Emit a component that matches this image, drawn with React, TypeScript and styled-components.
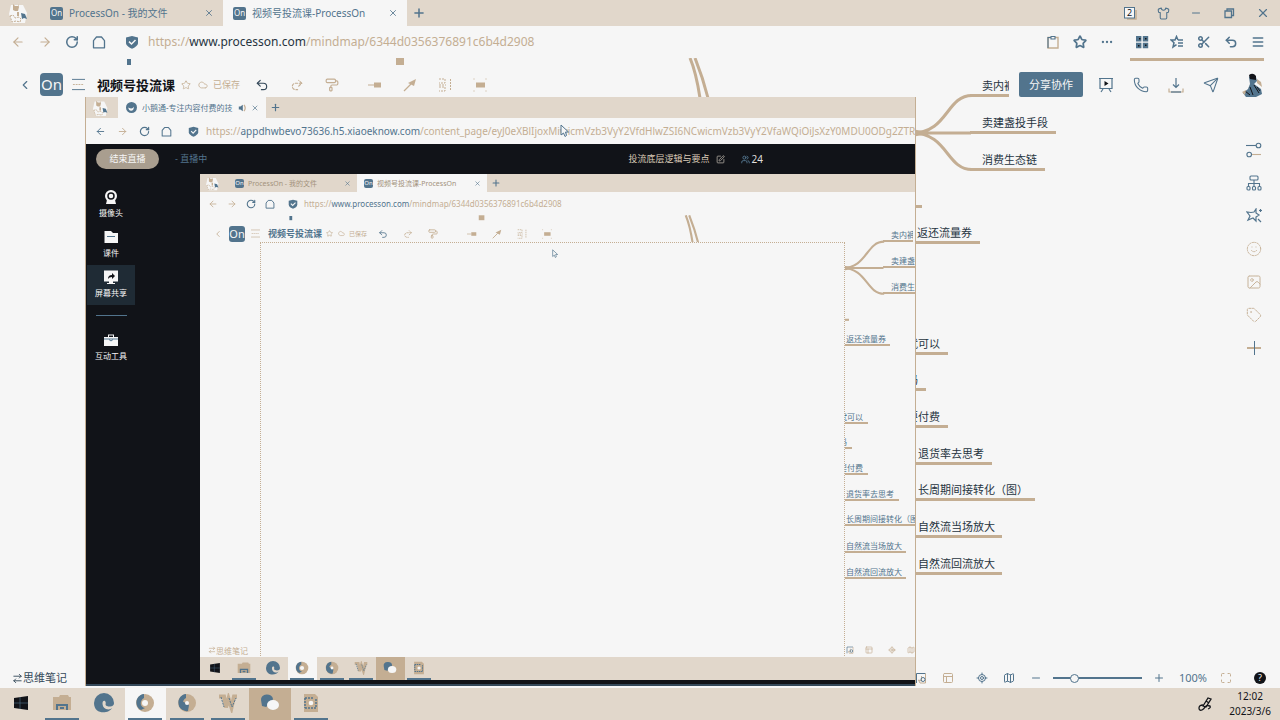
import React from "react";
import styled, { createGlobalStyle, css, ThemeProvider } from "styled-components";
import {
  ArrowLeft, ArrowRight, RotateCw, Star, Ellipsis, Scissors, Undo2, Redo2, Menu, Minus, Plus, X,
  Shirt, Phone, Send, Smile, Image as Picture, Tag, LocateFixed, Map as MapIcon, Maximize, PanelsTopLeft,
  PaintRoller, ChevronLeft, SquarePen, Users, Cloud, ArrowRightLeft,
} from "lucide-react";

const color = {
  paper: "#f6f6f6",
  strip: "#e1d7cb",
  tan: "#c4ae93",
  blue: "#52748d",
  ink: "#111318",
};

/* Lengths scale with the theme, so the shared screen can show the same desktop at a smaller size. */
const u = (n: number) => (p: any) => `${Math.round(n * p.theme.s)}px`;

const Global = createGlobalStyle`
  * { box-sizing: border-box; }
  body { margin: 0; background: ${color.paper}; font-family: "Noto Sans", "Noto Sans CJK SC", sans-serif; color: ${color.ink}; }
  button { border: 0; padding: 0; margin: 0; background: none; font: inherit; color: inherit; }
`;

const Screen = styled.div<{ $shared?: boolean }>`
  display: flex;
  flex-direction: column;
  background: ${color.paper};
  ${(p) => (p.$shared ? css`width: ${u(1280)}; height: 100%;` : css`min-height: 100vh;`)}
`;

const Spacer = styled.div`flex: 1;`;

const IconButton = styled.button<{ $size?: number; $tone?: string }>`
  display: block;
  flex: none;
  width: ${(p) => u(p.$size ?? 14)(p)};
  height: ${(p) => u(p.$size ?? 14)(p)};
  color: ${(p) => p.$tone ?? color.blue};
  svg { display: block; width: 100%; height: 100%; }
`;

/* ---------- browser chrome ---------- */

const TabStrip = styled.div`
  display: flex;
  align-items: center;
  flex: none;
  height: ${u(26)};
  padding-right: ${u(10)};
  background: ${color.strip};
`;
const Profile = styled.div`
  width: ${u(20)};
  margin-left: ${u(9)};
  margin-right: ${u(11)};
  flex: none;
  svg { display: block; width: 100%; height: ${u(22)}; }
`;
const Tab = styled.div<{ $active?: boolean; $width: number }>`
  display: flex;
  align-items: center;
  flex: none;
  gap: ${u(6)};
  width: ${(p) => u(p.$width)(p)};
  height: 100%;
  padding: 0 ${u(9)} 0 ${u(10)};
  background: ${(p) => (p.$active ? color.paper : "transparent")};
  color: ${color.blue};
`;
const TabTitle = styled.span<{ $faint?: boolean }>`
  flex: 1;
  min-width: 0;
  overflow: hidden;
  white-space: nowrap;
  font-size: ${u(10)};
  line-height: ${u(16)};
  color: ${(p) => (p.$faint ? "#a3927c" : color.blue)};
`;
const NewTab = styled.div`
  flex: 1;
  padding-left: ${u(5)};
`;
const Logo = styled.span<{ $size: number; $font: number }>`
  display: flex;
  align-items: center;
  justify-content: center;
  flex: none;
  width: ${(p) => u(p.$size)(p)};
  height: ${(p) => u(p.$size)(p)};
  border-radius: ${(p) => u(p.$size / 6)(p)};
  background: ${color.blue};
  color: ${color.paper};
  font-size: ${(p) => u(p.$font)(p)};
  line-height: 1;
`;
const WindowControls = styled.div`
  display: flex;
  align-items: center;
  gap: ${u(20)};
`;

const AddressBar = styled.div<{ $flush?: boolean }>`
  display: flex;
  align-items: center;
  flex: none;
  height: ${u(32)};
  padding: 0 ${(p) => (p.$flush ? "0px" : u(15)(p))} 0 ${u(11)};
`;
const NavGroup = styled.div`
  display: flex;
  align-items: center;
  gap: ${u(13)};
  margin-right: ${u(19)};
  flex: none;
`;
const ToolGroup = styled(NavGroup)<{ $end?: boolean }>`
  margin-right: ${(p) => (p.$end ? "0px" : u(21)(p))};
`;
const Url = styled.div<{ $font: number; $soft?: boolean }>`
  flex: 1;
  min-width: 0;
  overflow: hidden;
  white-space: nowrap;
  margin-left: ${u(9)};
  font-size: ${(p) => p.$font}px;
  line-height: ${u(20)};
  color: ${color.tan};
  b { font-weight: 400; color: ${(p) => (p.$soft ? color.blue : "#26343f")}; }
`;

const CatArt = () => (
  <svg viewBox="0 0 20 22" aria-hidden="true">
    <path d="M2 3h12l4 8-2 10H3L0 12z" fill={color.paper} />
    <path d="M4 2l2 2h3V2l1 3-1 4H6L4 8zM8 10h2v4H8z" fill={color.tan} />
    <path d="M12 11l4 1 2 5-3-1-2 1z" fill={color.blue} />
    <path d="M1 14l3-1 2 3 4-1 2 2-1 3-4-1-4 1z" fill="none" stroke={color.tan} strokeDasharray="2 1" />
  </svg>
);
const HomeIcon = () => (
  <svg viewBox="0 0 14 14" fill="none" stroke="currentColor" strokeWidth="1.3">
    <path d="M1.5 12.8V5.600L4.500 2h5l3 3.600V12.800z" strokeLinejoin="round" />
  </svg>
);
const ShieldIcon = () => (
  <svg viewBox="0 0 14 14">
    <path d="M1 2.500L7 1l6 1.500V8c0 2.500-3 4.500-6 5.700C4 12.500 1 10.500 1 8z" fill="currentColor" />
    <path d="M4 6.600l2.500 2.400 4-4" fill="none" stroke={color.paper} strokeWidth="1.500" />
  </svg>
);
const ClipboardIcon = () => (
  <svg viewBox="0 0 14 14" fill="none" stroke="currentColor">
    <path d="M9 2.500h3v10.500H2V2.500h3" stroke={color.tan} strokeWidth="1.400" />
    <path d="M2 13V2.500h3M5 4V1.500h4V4z" strokeWidth="1.100" />
  </svg>
);
const GridIcon = () => (
  <svg viewBox="0 0 14 14" fill="currentColor">
    <path d="M1 1h5.400v5.400H1zM7.800 1h5.400v5.400H7.800zM1 7.800h5.400v5.400H1zM7.800 7.800h5.400v5.400H7.800z" />
    <path d="M4 3h1.500v1.500H4zM10 3h1.500v1.500H10zM3 10h1.500v1.500H3zM10 9.500h1.500V11H10z" fill={color.ink} />
  </svg>
);
const StarListIcon = () => (
  <svg viewBox="0 0 14 14" fill="none" stroke="currentColor" strokeWidth="1.500">
    <path d="M8 5L6.500 1.500 5 5H1l3 2.700L3 12l3.500-2.300M8 5h5M8 8h5M8 11h5" />
  </svg>
);
const RestoreIcon = () => (
  <svg viewBox="0 0 14 14" fill="none" stroke="currentColor" strokeWidth="1.300">
    <path d="M3 5h6.500v6.500H3zM5 5V3h6.500v6.500H9.500" />
  </svg>
);
const CountIcon = () => (
  <svg viewBox="0 0 14 14" fill="none">
    <path d="M4 13h9V4" stroke={color.tan} strokeWidth="1.500" />
    <rect x="1.500" y="1.500" width="10" height="10.500" fill={color.paper} stroke={color.blue} />
    <text x="6.500" y="10" textAnchor="middle" fontSize="9" fill={color.ink}>2</text>
  </svg>
);

const NavButtons = ({ canGoBack }: { canGoBack?: boolean }) => (
  <NavGroup>
    <IconButton aria-label="后退" $tone={canGoBack ? color.blue : color.tan}><ArrowLeft /></IconButton>
    <IconButton aria-label="前进" $tone={color.tan}><ArrowRight /></IconButton>
    <IconButton aria-label="刷新"><RotateCw strokeWidth={2.6} /></IconButton>
    <IconButton aria-label="主页"><HomeIcon /></IconButton>
  </NavGroup>
);

const BrowserChrome = ({ shared }: { shared?: boolean }) => (
  <>
    <TabStrip>
      <Profile><CatArt /></Profile>
      <Tab $width={183}>
        <Logo $size={13} $font={8}>On</Logo>
        <TabTitle $faint={shared}>ProcessOn - 我的文件</TabTitle>
        <IconButton $size={10} aria-label="关闭标签页"><X /></IconButton>
      </Tab>
      <Tab $width={184} $active>
        <Logo $size={13} $font={8}>On</Logo>
        <TabTitle $faint={shared}>视频号投流课-ProcessOn</TabTitle>
        <IconButton $size={10} aria-label="关闭标签页"><X /></IconButton>
      </Tab>
      <NewTab>
        <IconButton aria-label="新标签页"><Plus strokeWidth={2.6} /></IconButton>
      </NewTab>
      <WindowControls>
        <IconButton aria-label="窗口数"><CountIcon /></IconButton>
        <IconButton $size={13} aria-label="皮肤"><Shirt /></IconButton>
        <IconButton $size={12} aria-label="最小化"><Minus /></IconButton>
        <IconButton aria-label="还原"><RestoreIcon /></IconButton>
        <IconButton aria-label="关闭"><X /></IconButton>
      </WindowControls>
    </TabStrip>
    <AddressBar>
      <NavButtons />
      <IconButton aria-label="安全"><ShieldIcon /></IconButton>
      <Url $font={shared ? 8 : 12} $soft={shared}>https://<b>www.processon.com</b>/mindmap/6344d0356376891c6b4d2908</Url>
      <ToolGroup>
        <IconButton aria-label="剪贴板"><ClipboardIcon /></IconButton>
        <IconButton aria-label="收藏"><Star strokeWidth={3} /></IconButton>
        <IconButton aria-label="更多"><Ellipsis /></IconButton>
      </ToolGroup>
      <ToolGroup>
        <IconButton aria-label="应用"><GridIcon /></IconButton>
      </ToolGroup>
      <ToolGroup $end>
        <IconButton aria-label="收藏夹"><StarListIcon /></IconButton>
        <IconButton aria-label="截图"><Scissors strokeWidth={2.6} /></IconButton>
        <IconButton aria-label="撤销"><Undo2 strokeWidth={2.6} /></IconButton>
        <IconButton aria-label="菜单"><Menu strokeWidth={2.6} /></IconButton>
      </ToolGroup>
    </AddressBar>
  </>
);

/* ---------- mind map editor ---------- */

const Editor = styled.main`
  position: relative;
  display: flex;
  flex-direction: column;
  flex: 1;
  min-height: 0;
  overflow: hidden;
`;
const MapLayer = styled.div`
  position: absolute;
  inset: 0;
`;
const MapLines = styled.svg`
  display: block;
  width: ${u(1280)};
  height: ${u(630)};
`;
const Node = styled.div<{ $x: number; $y: number; $w: number; $pad: number; $soft?: boolean }>`
  position: absolute;
  left: ${(p) => u(p.$x)(p)};
  top: ${(p) => u(p.$y - 8)(p)};
  width: ${(p) => u(p.$w)(p)};
  padding-left: ${(p) => u(p.$pad)(p)};
  border-bottom: ${u(3)} solid ${color.tan};
  white-space: nowrap;
  font-size: ${u(11)};
  line-height: ${u(16)};
  color: ${(p) => (p.$soft ? color.blue : "#26343f")};
`;

const nodes: { text: string; x: number; y: number; w: number; pad: number }[] = [
  { text: "卖内裤", x: 970, y: 28, w: 60, pad: 12 },
  { text: "卖建盏投手段", x: 970, y: 65, w: 86, pad: 12 },
  { text: "消费生态链", x: 970, y: 102, w: 75, pad: 12 },
  { text: "返还流量券", x: 906, y: 175, w: 74, pad: 11 },
  { text: "就可以", x: 906, y: 286, w: 42, pad: 1 },
  { text: "吗", x: 906, y: 322, w: 20, pad: 1 },
  { text: "要付费", x: 906, y: 359, w: 42, pad: 1 },
  { text: "退货率去思考", x: 906, y: 396, w: 86, pad: 12 },
  { text: "长周期间接转化（图）", x: 906, y: 432, w: 129, pad: 12 },
  { text: "自然流当场放大", x: 906, y: 469, w: 96, pad: 12 },
  { text: "自然流回流放大", x: 906, y: 506, w: 96, pad: 12 },
];

const DocBar = styled.header`
  position: relative;
  display: flex;
  align-items: center;
  flex: none;
  height: ${u(27)};
  margin-top: ${u(13)};
  padding: 0 ${u(15)} 0 ${u(18)};
`;
const BackLogo = styled.div`
  display: flex;
  align-items: center;
  gap: ${u(8)};
`;
const MenuButton = styled(IconButton)`
  margin: 0 ${u(12)} 0 ${u(9)};
`;
const DocTitle = styled.h1<{ $soft?: boolean }>`
  margin: 0 ${u(6)} 0 0;
  white-space: nowrap;
  font-size: ${u(13)};
  line-height: ${u(20)};
  font-weight: 700;
  color: ${(p) => (p.$soft ? color.blue : color.ink)};
`;
const SaveState = styled.div`
  display: flex;
  align-items: center;
  gap: ${u(5)};
  margin: 0 ${u(15)} 0 ${u(7)};
  white-space: nowrap;
  font-size: ${u(9)};
  color: ${color.tan};
`;
const EditTools = styled.div`
  display: flex;
  gap: ${u(21)};
  & + & { margin-left: ${u(41)}; }
`;
const ShareArea = styled.div`
  display: flex;
  align-items: center;
  gap: ${u(19)};
  margin-left: auto;
  padding-left: ${u(10)};
  height: 100%;
  background: ${color.paper};
`;
const ShareButton = styled.button`
  width: ${u(64)};
  height: ${u(25)};
  margin-right: -${u(4)};
  border-radius: 2px;
  background: ${color.blue};
  color: ${color.paper};
  font-size: ${u(11)};
  line-height: ${u(16)};
`;
const Avatar = styled(IconButton)`
  margin-left: ${u(3)};
`;
const Rail = styled.aside`
  position: relative;
  display: flex;
  flex-direction: column;
  align-self: flex-end;
  flex: 1;
  gap: ${u(17)};
  padding: ${u(44)} ${u(18)} 0;
`;

const StatusBar = styled.footer`
  position: relative;
  display: flex;
  align-items: center;
  flex: none;
  height: ${u(20)};
  padding: 0 ${u(14)} 0 ${u(12)};
`;
const Notes = styled.button<{ $soft?: boolean }>`
  display: flex;
  align-items: center;
  font-size: ${u(11)};
  line-height: ${u(16)};
  color: ${(p) => (p.$soft ? color.tan : "#35495a")};
  svg { width: ${u(11)}; height: ${u(11)}; }
`;
const StatusGroup = styled.div<{ $after: number }>`
  display: flex;
  gap: ${u(15)};
  margin-right: ${(p) => u(p.$after)(p)};
`;
const Zoom = styled.div`
  display: flex;
  align-items: center;
  gap: ${u(11)};
  margin-right: ${u(14)};
`;
const ZoomRange = styled.input`
  appearance: none;
  width: ${u(89)};
  height: ${u(10)};
  margin: 0;
  background: linear-gradient(${color.blue}, ${color.blue}) center / 100% 2px no-repeat;
  &::-webkit-slider-thumb {
    appearance: none;
    width: ${u(9)};
    height: ${u(9)};
    border: 1px solid ${color.blue};
    border-radius: 50%;
    background: ${color.paper};
  }
`;
const ZoomValue = styled.span`
  margin-right: ${u(13)};
  font-size: ${u(11)};
  line-height: ${u(16)};
  color: ${color.blue};
`;

const NodeToolIcon = () => (
  <svg viewBox="0 0 14 14"><path d="M6 4.500h7v5H6z" fill={color.tan} /><path d="M0 7h6" stroke={color.tan} /></svg>
);
const RelationIcon = () => (
  <svg viewBox="0 0 14 14"><path d="M1 13l7-7" stroke={color.tan} strokeWidth="1.300" /><path d="M13 1l-2 7-2-1-4-2z" fill={color.tan} /></svg>
);
const SummaryIcon = () => (
  <svg viewBox="0 0 14 14" fill="none" stroke={color.tan}><path d="M1 1h6v4H1M1 9h6v4H1M12.500 1v12M1 7h7" strokeDasharray="2 1" /></svg>
);
const OuterFrameIcon = () => (
  <svg viewBox="0 0 14 14"><path d="M3 4.500h9v5H3z" fill={color.tan} /><path d="M.500 1h1M12.500 1h1M.500 13h1M12.500 13h1" stroke={color.tan} /></svg>
);
const LinesIcon = () => (
  <svg viewBox="0 0 14 14" stroke="currentColor" fill="none"><path d="M0 1.500h14M0 12.500h14" /><path d="M1 7h12" stroke={color.tan} strokeDasharray="2 1" /></svg>
);
const PlayBoardIcon = () => (
  <svg viewBox="0 0 16 16" fill="none" stroke="currentColor" strokeWidth="1.200">
    <path d="M1 1.500h14M2 1.500v10h12v-10M5 12l-2 3M11 12l2 3" />
    <path d="M6.500 4v5l4-2.500z" fill={color.ink} stroke="none" />
  </svg>
);
const TrayIcon = () => (
  <svg viewBox="0 0 16 16" fill="none" stroke="currentColor" strokeWidth="1.200">
    <path d="M8 1v9M5 7.500l3 3 3-3" /><path d="M1 11.500V15h14v-3.500" stroke={color.tan} /><path d="M3 15h10" />
  </svg>
);
const StyleIcon = () => (
  <svg viewBox="0 0 16 16" fill="none" stroke="currentColor" strokeWidth="1.100">
    <path d="M0 3.500h10" /><circle cx="12.500" cy="3.500" r="2.300" /><circle cx="3.200" cy="12.500" r="2.300" /><path d="M6 12.500h9" stroke={color.tan} />
  </svg>
);
const StructureIcon = () => (
  <svg viewBox="0 0 16 16" fill="none" stroke="currentColor" strokeWidth="1.100">
    <rect x="4" y="1" width="8" height="4" rx="1" /><path d="M8 5v6M2.500 11V8.500h11V11" />
    <rect x="1" y="11.500" width="3" height="3.500" rx="1" /><rect x="6.500" y="11.500" width="3" height="3.500" rx="1" /><rect x="12" y="11.500" width="3" height="3.500" rx="1" />
  </svg>
);
const MagicIcon = () => (
  <svg viewBox="0 0 16 16" fill="none" stroke="currentColor" strokeWidth="1.200">
    <path d="M8 4l2 -3v4l3 2-3 2v4l-3-3-5 2 2-4-3-4 4 .500zM14.500 1v3M13 2.500h3M12 11l3 3" />
  </svg>
);
const AddIcon = () => (
  <svg viewBox="0 0 16 16" fill="none"><path d="M1 8h14" stroke={color.tan} strokeWidth="2" /><path d="M8.500 1v14" stroke="currentColor" /></svg>
);
const OutlinePageIcon = () => (
  <svg viewBox="0 0 12 12" fill="none" stroke={color.blue}>
    <path d="M1.500 11V1.500h9" /><path d="M10.500 1.500V11H5l-1.500-3 3 1V4" stroke={color.tan} /><circle cx="8" cy="7.500" r="2" />
  </svg>
);
const HelpIcon = () => (
  <svg viewBox="0 0 12 12"><circle cx="6" cy="6" r="6" fill={color.ink} /><text x="6" y="9.200" textAnchor="middle" fontSize="9" fill={color.paper}>?</text></svg>
);
const PersonArt = () => (
  <svg viewBox="0 0 24 24">
    <path d="M8 4q3-4 7 0l1 4-3 3 7 5 1 5-6 3H5l-3-4 5-4 2-5z" fill={color.blue} />
    <path d="M8 2q4-3 7 1v4l-6-1z" fill={color.ink} />
    <path d="M9 14l3 8M13 12l5 8M4 18l5 4M16 14l3 4" stroke={color.ink} />
    <path d="M16 6l4 3 1 5-5-4zM1 19l4-2-1 5z" fill={color.tan} />
  </svg>
);

const MindMap = ({ shared }: { shared?: boolean }) => (
  <MapLayer>
    <MapLines viewBox="0 0 1280 630" fill="none" stroke={color.tan} strokeWidth="3">
      <path d="M127 1h4v6h-4z" fill={color.blue} stroke="none" />
      <path d="M396 0h8v7h-8z" fill={color.tan} stroke="none" />
      <path d="M690 0Q696 14 700 40M695 0Q703 20 708 40" />
      <path d="M1130 1.500H1264" />
      <path d="M900 75H971M912 75C948 75 946 37.500 972 37.500M912 75C948 75 946 111.500 972 111.500" />
      <path d="M912 71L932 75 912 79z" fill={color.tan} stroke="none" />
      <path d="M906 148.500h16" />
    </MapLines>
    {nodes.map((n) => (
      <Node key={n.text} $x={n.x} $y={n.y} $w={n.w} $pad={n.pad} $soft={shared}>{n.text}</Node>
    ))}
  </MapLayer>
);

const EditorView = ({ shared, children }: { shared?: boolean; children?: React.ReactNode }) => {
  const tone = shared ? color.tan : color.blue;
  return (
    <Editor as={shared ? "div" : "main"}>
      <MindMap shared={shared} />
      <DocBar>
        <BackLogo>
          <IconButton aria-label="返回" $tone={tone}><ChevronLeft /></IconButton>
          <Logo $size={23} $font={15}>On</Logo>
        </BackLogo>
        <MenuButton $size={13} $tone={tone} aria-label="菜单"><LinesIcon /></MenuButton>
        <DocTitle $soft={shared}>视频号投流课</DocTitle>
        <IconButton $size={10} $tone={color.tan} aria-label="收藏"><Star strokeDasharray="3 2" /></IconButton>
        <SaveState>
          <IconButton as="span" $size={10} $tone={color.tan}><Cloud strokeDasharray="3 2" /></IconButton>
          已保存
        </SaveState>
        <EditTools>
          <IconButton aria-label="撤销" $tone={shared ? color.blue : "#35495a"}><Undo2 /></IconButton>
          <IconButton aria-label="重做" $tone={color.tan}><Redo2 strokeDasharray="4 3" /></IconButton>
          <IconButton aria-label="格式刷" $tone={color.tan}><PaintRoller /></IconButton>
        </EditTools>
        <EditTools>
          <IconButton aria-label="主题"><NodeToolIcon /></IconButton>
          <IconButton aria-label="关联线"><RelationIcon /></IconButton>
          <IconButton aria-label="概要"><SummaryIcon /></IconButton>
          <IconButton aria-label="外框"><OuterFrameIcon /></IconButton>
        </EditTools>
        <ShareArea>
          <ShareButton>分享协作</ShareButton>
          <IconButton $size={16} aria-label="演示"><PlayBoardIcon /></IconButton>
          <IconButton $size={16} aria-label="语音"><Phone strokeWidth={1.6} /></IconButton>
          <IconButton $size={16} aria-label="下载"><TrayIcon /></IconButton>
          <IconButton $size={16} aria-label="发送"><Send strokeWidth={1.6} /></IconButton>
          <Avatar $size={24} aria-label="账户"><PersonArt /></Avatar>
        </ShareArea>
      </DocBar>
      <Rail>
        <IconButton $size={16} aria-label="样式"><StyleIcon /></IconButton>
        <IconButton $size={16} aria-label="结构"><StructureIcon /></IconButton>
        <IconButton $size={16} aria-label="美化"><MagicIcon /></IconButton>
        <IconButton $size={16} $tone={color.tan} aria-label="表情"><Smile strokeWidth={1.4} strokeDasharray="2 2" /></IconButton>
        <IconButton $size={16} $tone={color.tan} aria-label="图片"><Picture strokeWidth={1.4} strokeDasharray="3 1" /></IconButton>
        <IconButton $size={16} $tone={color.tan} aria-label="标签"><Tag strokeWidth={1.4} strokeDasharray="3 2" /></IconButton>
        <IconButton $size={16} aria-label="添加"><AddIcon /></IconButton>
      </Rail>
      {children}
      <StatusBar>
        <Notes $soft={shared}><ArrowRightLeft />思维笔记</Notes>
        <Spacer />
        <StatusGroup $after={22}>
          <IconButton $size={12} aria-label="大纲"><OutlinePageIcon /></IconButton>
          <IconButton $size={12} $tone={color.tan} aria-label="布局"><PanelsTopLeft /></IconButton>
        </StatusGroup>
        <StatusGroup $after={11}>
          <IconButton $size={12} $tone={tone} aria-label="定位"><LocateFixed /></IconButton>
          <IconButton $size={12} $tone={tone} aria-label="导航"><MapIcon /></IconButton>
          <IconButton $size={12} aria-label="缩小"><Minus /></IconButton>
        </StatusGroup>
        <Zoom>
          <ZoomRange type="range" min={0} max={100} defaultValue={21} aria-label="缩放" />
          <IconButton $size={12} aria-label="放大"><Plus /></IconButton>
        </Zoom>
        <ZoomValue>100%</ZoomValue>
        <StatusGroup $after={22}>
          <IconButton $size={12} $tone={color.tan} aria-label="全屏"><Maximize /></IconButton>
        </StatusGroup>
        <IconButton $size={12} aria-label="帮助"><HelpIcon /></IconButton>
      </StatusBar>
    </Editor>
  );
};

/* ---------- taskbar ---------- */

const TaskbarRow = styled.div`
  display: flex;
  flex: none;
  height: ${u(32)};
  background: ${color.strip};
`;
const Apps = styled.div`
  display: grid;
  grid-template-columns: repeat(8, 1fr);
  width: ${u(332)};
`;
const TaskButton = styled.button<{ $fill?: string; $open?: boolean }>`
  display: flex;
  align-items: center;
  justify-content: center;
  border-bottom: 2px solid transparent;
  background-color: ${(p) => p.$fill ?? "transparent"};
  ${(p) => p.$open && css`
    background-image: linear-gradient(${color.blue}, ${color.blue});
    background-origin: border-box;
    background-position: center bottom;
    background-repeat: no-repeat;
    background-size: ${u(34)} 2px;
  `}
  svg { width: ${u(20)}; height: ${u(20)}; }
`;
const Tray = styled.div`
  display: flex;
  align-items: center;
  gap: ${u(17)};
  margin-left: auto;
  padding-right: ${u(9)};
`;
const Clock = styled.time`
  text-align: center;
  font-size: ${u(10)};
  line-height: ${u(15)};
`;

const WindowsArt = () => (
  <svg viewBox="0 0 20 20"><path d="M3 5l14-2v14L3 15z" fill={color.ink} /><path d="M9 4v12M3 10h14" stroke={color.blue} strokeWidth=".6" /></svg>
);
const FolderArt = () => (
  <svg viewBox="0 0 20 20"><path d="M1 4h6l1-2h8l1 2h2v13H1z" fill={color.tan} /><path d="M5 17v-5h10v5M8 15h4" fill="none" stroke={color.blue} strokeWidth="2" /></svg>
);
const EdgeArt = () => (
  <svg viewBox="0 0 20 20"><path d="M0 10a10 10 0 0 1 20 0c0 4-5 4-7 3-3-1 0-3-2-5-3-2-4 6 1 8 3 1 5 0 6-1-3 6-18 7-18-5z" fill={color.blue} /></svg>
);
const RingArt = ({ flip }: { flip?: boolean }) => (
  <svg viewBox="0 0 20 20">
    <circle cx="10" cy="10" r="9" fill={color.tan} />
    <path d="M9 1C0 2-1 14 6 17l4-2C5 14 4 8 9 5z" fill={color.blue} />
    {flip && <path d="M2 13q4 6 9 5l1-6-7-4z" fill={color.blue} />}
    <circle cx="10" cy="10" r={flip ? 2 : 3} fill={color.paper} />
  </svg>
);
const WriterArt = () => (
  <svg viewBox="0 0 20 20" fill="none">
    <path d="M1 3.500h5l2 11 2.500-9 3 9L16 3.500h3" stroke={color.tan} strokeWidth="4" /><path d="M3 4l3 10M11 5l3 9 4-9" stroke={color.blue} strokeDasharray="2 1" />
  </svg>
);
const ChatArt = () => (
  <svg viewBox="0 0 20 20"><path d="M1 7a6 5 0 0 1 12-1l-2 4-5 4-4-1z" fill={color.blue} /><ellipse cx="13" cy="12" rx="6" ry="5" fill={color.paper} /></svg>
);
const FileArt = () => (
  <svg viewBox="0 0 20 20"><path d="M3 1h11l3 3v15H3z" fill={color.tan} /><path d="M4 5h8M4 15h11M4 5v10M15 6v9" stroke={color.blue} strokeWidth="1.500" strokeDasharray="2 1" /><circle cx="10" cy="10" r="2.300" fill={color.paper} /></svg>
);

const Taskbar = () => (
  <TaskbarRow>
    <Apps>
      <TaskButton aria-label="开始"><WindowsArt /></TaskButton>
      <TaskButton aria-label="文件" $open><FolderArt /></TaskButton>
      <TaskButton aria-label="Edge"><EdgeArt /></TaskButton>
      <TaskButton aria-label="浏览器" $fill={color.paper} $open><RingArt /></TaskButton>
      <TaskButton aria-label="浏览器" $open><RingArt flip /></TaskButton>
      <TaskButton aria-label="WPS" $open><WriterArt /></TaskButton>
      <TaskButton aria-label="微信" $fill={color.tan}><ChatArt /></TaskButton>
      <TaskButton aria-label="文档" $open><FileArt /></TaskButton>
    </Apps>
    <Tray>
      <IconButton aria-label="手写笔">
        <svg viewBox="0 0 14 14" fill="none" stroke={color.ink} strokeWidth="1.300">
          <path d="M5 9l5-8 3 1-5 8zM8 4l3 2" /><path d="M5 8Q1 8 1 11t3 2q2-1 3-3t5-1q1 2-2 3" />
        </svg>
      </IconButton>
      <Clock>12:02<br />2023/3/6</Clock>
    </Tray>
  </TaskbarRow>
);

/* ---------- live streaming window ---------- */

const FloatingWindow = styled.section<{ $ghost?: boolean }>`
  position: absolute;
  left: ${u(85)};
  top: ${u(39)};
  bottom: ${u(2)};
  width: ${u(831)};
  display: flex;
  flex-direction: column;
  overflow: hidden;
  background: ${color.paper};
  border: 1px solid ${color.tan};
  border-width: ${(p) => (p.$ghost ? "1px 1px 0" : "0 1px")};
  border-style: ${(p) => (p.$ghost ? "dotted" : "solid")};
`;
const LiveHeader = styled.header`
  display: flex;
  align-items: center;
  flex: none;
  height: 30px;
  padding: 0 152px 0 10px;
  background: ${color.ink};
  font-size: 9px;
  line-height: 16px;
  color: ${color.blue};
`;
const EndButton = styled.button`
  width: 63px;
  height: 20px;
  margin-right: 16px;
  border-radius: 10px;
  background: #a99e8f;
  color: ${color.paper};
`;
const LiveTitle = styled.div`
  display: flex;
  align-items: center;
  gap: 6px;
  margin: 0 16px 0 auto;
  color: #dccdb9;
`;
const Viewers = styled.div`
  display: flex;
  align-items: center;
  gap: 2px;
  font-size: 10px;
  color: #dfdedc;
`;
const LiveBody = styled.div`
  display: flex;
  flex: 1;
  min-height: 0;
  padding-bottom: 4px;
  background: ${color.ink};
  border-bottom: 2px solid #35495a;
`;
const LiveNav = styled.nav`
  display: flex;
  flex-direction: column;
  flex: none;
  width: 114px;
  padding: 11px 0 0 1px;
`;
const LiveItem = styled.button<{ $on?: boolean }>`
  display: flex;
  flex-direction: column;
  align-items: center;
  width: 48px;
  height: 40px;
  padding-top: 4px;
  gap: 1px;
  background: ${(p) => (p.$on ? "#1f2b35" : "transparent")};
  color: ${color.paper};
  font-size: 8px;
  line-height: 14px;
  svg { width: 16px; height: 16px; display: block; }
`;
const Divider = styled.hr`
  width: 31px;
  height: 1px;
  margin: 10px 0 12px 9px;
  border: 0;
  background: ${color.blue};
`;
const SharedScreen = styled.div`
  flex: 1;
  min-width: 0;
  overflow: hidden;
`;
const Pointer = styled.svg<{ $x: number; $y: number }>`
  position: absolute;
  left: ${(p) => u(p.$x)(p)};
  top: ${(p) => u(p.$y)(p)};
  width: ${u(9)};
  height: ${u(13)};
`;

const Cursor = ({ x, y }: { x: number; y: number }) => (
  <Pointer viewBox="0 0 9 13" $x={x} $y={y} aria-hidden="true">
    <path d="M1 1v10l2.500-2 1.500 3.500 1.500-1L5.500 8H8.500z" fill={color.paper} stroke={color.blue} />
  </Pointer>
);

const full = { s: 1 };
const inWindow = { s: 0.82 };
const small = { s: 0.704 };

const LiveWindow = () => (
  <FloatingWindow>
    <ThemeProvider theme={inWindow}>
      <TabStrip>
        <Profile><CatArt /></Profile>
        <Tab $width={180} $active>
          <IconButton as="span" $size={13}>
            <svg viewBox="0 0 14 14"><circle cx="7" cy="7" r="7" fill={color.blue} /><path d="M3 7q5 3 7-1 0 5-3.500 5T3 7z" fill={color.paper} /></svg>
          </IconButton>
          <TabTitle>小鹅通-专注内容付费的技</TabTitle>
          <IconButton $size={10} aria-label="静音">
            <svg viewBox="0 0 10 10"><path d="M1 3h2l3-2v8L3 7H1z" fill={color.blue} /><path d="M7.500 1q3 4 0 8" stroke={color.tan} strokeWidth="1.500" fill="none" /></svg>
          </IconButton>
          <IconButton $size={10} aria-label="关闭标签页"><X /></IconButton>
        </Tab>
        <NewTab><IconButton aria-label="新标签页"><Plus strokeWidth={2.6} /></IconButton></NewTab>
      </TabStrip>
      <AddressBar $flush>
        <NavButtons canGoBack />
        <IconButton aria-label="安全"><ShieldIcon /></IconButton>
        <Url $font={10} $soft>https://<b>appdhwbevo73636.h5.xiaoeknow.com</b>/content_page/eyJ0eXBlIjoxMiwicmVzb3VyY2VfdHlwZSI6NCwicmVzb3VyY2VfaWQiOiJsXzY0MDU0ODg2ZTRiMDV</Url>
      </AddressBar>
    </ThemeProvider>
    <LiveHeader>
      <EndButton>结束直播</EndButton>
      <span>- 直播中</span>
      <LiveTitle>投流底层逻辑与要点<IconButton $size={9} $tone="#b9b3aa" aria-label="编辑"><SquarePen /></IconButton></LiveTitle>
      <Viewers><IconButton as="span" $size={9}><Users strokeWidth={2.6} /></IconButton>24</Viewers>
    </LiveHeader>
    <LiveBody>
      <LiveNav>
        <LiveItem>
          <svg viewBox="0 0 16 16"><path d="M4 11h8l1 4H3z" fill={color.paper} /><circle cx="8" cy="7" r="6" fill={color.paper} /><circle cx="8" cy="7" r="3" fill="none" stroke={color.ink} strokeWidth="1.500" /></svg>
          摄像头
        </LiveItem>
        <LiveItem>
          <svg viewBox="0 0 16 16"><path d="M1.500 2H8l2 2h5v10h-13.500z" fill={color.paper} /><path d="M4 7.500h8" stroke={color.blue} /></svg>
          课件
        </LiveItem>
        <LiveItem $on>
          <svg viewBox="0 0 16 16"><path d="M1 1.500h14v11h-5v1.500h2v1H4v-1h2v-1.500H1z" fill={color.paper} /><path d="M5 10q0-4 4-4V4l3 3-3 3V8Q6 8 5 10z" fill={color.ink} /></svg>
          屏幕共享
        </LiveItem>
        <Divider />
        <LiveItem>
          <svg viewBox="0 0 16 16"><path d="M1 5h4V2.500h6V5h4v9H1zM6 3.500V5h4V3.500z" fill={color.paper} fillRule="evenodd" /><path d="M1 7h14M6 7.500q2 3 4 0" stroke={color.blue} fill="none" /></svg>
          互动工具
        </LiveItem>
      </LiveNav>
      <SharedScreen>
        <ThemeProvider theme={small}>
          <Screen $shared>
            <BrowserChrome shared />
            <EditorView shared>
              <FloatingWindow $ghost><Cursor x={413} y={8} /></FloatingWindow>
            </EditorView>
            <Taskbar />
          </Screen>
        </ThemeProvider>
      </SharedScreen>
    </LiveBody>
    <Cursor x={474} y={27} />
  </FloatingWindow>
);

export default function App() {
  return (
    <ThemeProvider theme={full}>
      <Global />
      <Screen>
        <BrowserChrome />
        <EditorView>
          <LiveWindow />
        </EditorView>
        <Taskbar />
      </Screen>
    </ThemeProvider>
  );
}
